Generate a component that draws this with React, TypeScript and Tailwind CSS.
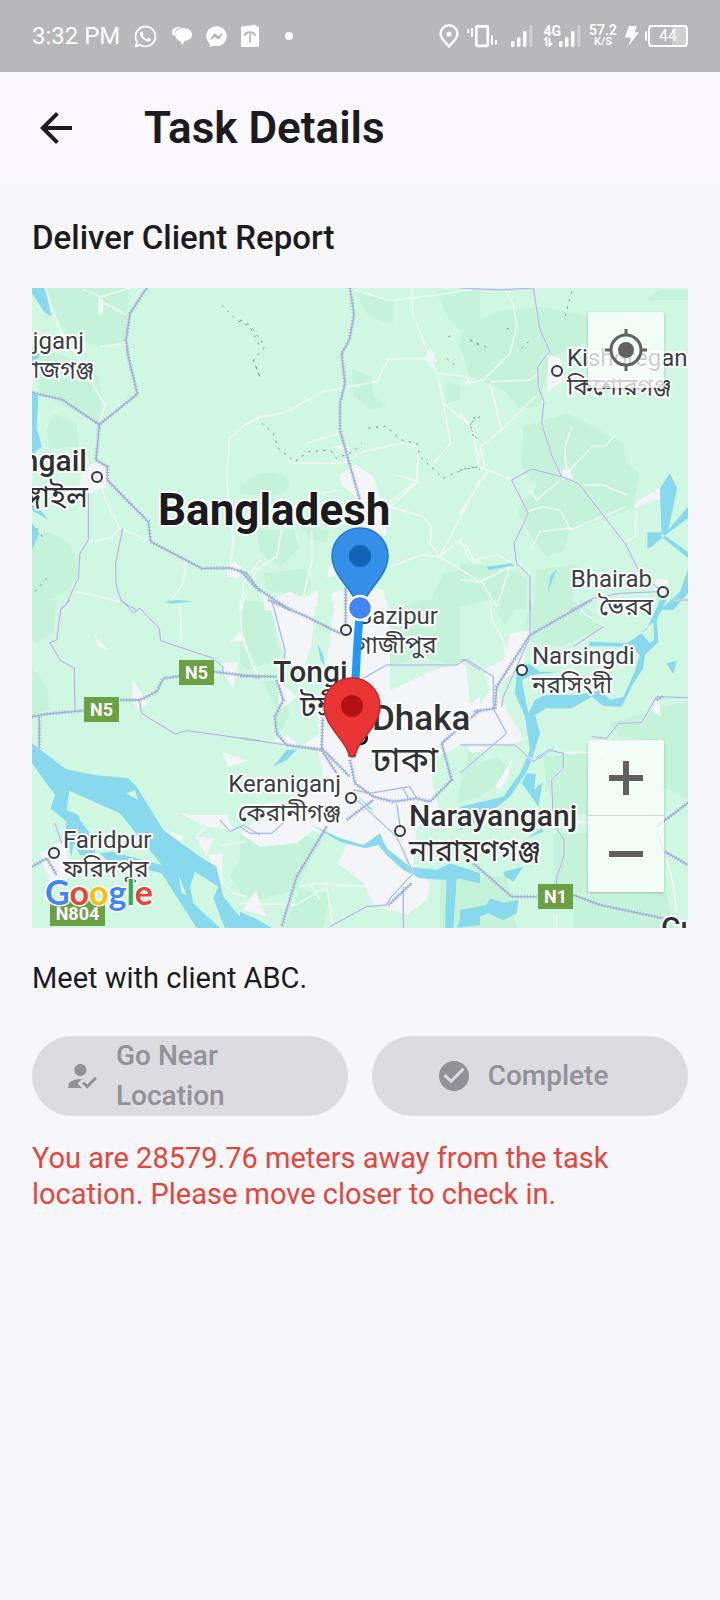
import type { ReactNode, SVGProps } from "react";
import { FaFacebookMessenger, FaWhatsapp } from "react-icons/fa";
import { MdArrowBack, MdCheckCircle, MdHowToReg } from "react-icons/md";

/* ---------- Status bar ---------- */

function SignalBars() {
  return (
    <svg viewBox="0 0 22 22" className="h-[22px] w-[22px]" fill="white">
      <rect x="0" y="16" width="3.500" height="6" rx="1.500" />
      <rect x="6" y="12" width="3.500" height="10" rx="1.500" />
      <rect x="12" y="6" width="3.500" height="16" rx="1.500" />
      <rect x="18" y="0" width="3.500" height="22" rx="1.500" opacity="0.3" />
    </svg>
  );
}

function StatusBar() {
  return (
    <div className="flex h-[72px] items-center justify-between bg-[#b8b8ba] px-8 text-white">
      <div className="flex items-center gap-[13px]">
        <span className="text-2xl">3:32 PM</span>
        <FaWhatsapp size={25} />
        <svg viewBox="0 0 22 22" className="h-[22px] w-[22px]" fill="white">
          <path d="M1 8C0.500 3 6 0.500 12 2.300C6 2.500 3 6 4 11C2 10.500 1 9.500 1 8Z" />
          <path d="M12.500 3.200C17.500 3.200 21 5.200 21 9.500C21 13.500 18 15.500 13.500 15.700L11.500 20.500L9.500 16.500C6.500 15 4.200 13 4.200 9.500C4.200 5.200 8 3.200 12.500 3.200Z" />
        </svg>
        <FaFacebookMessenger size={21} />
        <svg viewBox="0 0 20 24" className="h-6 w-5" fill="white">
          <path d="M2 2.500L15 0.500L17 2V3H2Z" opacity="0.8" />
          <rect x="1" y="2.500" width="18" height="20.500" rx="1" />
          <path d="M4.500 12C5.500 7 14.500 7 15.500 12M10 9.500V18.500" stroke="#b8b8ba" strokeWidth="1.800" fill="none" />
        </svg>
        <span className="ml-3 size-2 rounded-full bg-white" />
      </div>
      <div className="flex items-center gap-2">
        <svg viewBox="0 0 20 24" className="h-6 w-5" fill="none" stroke="white" strokeWidth="2.400">
          <path d="M10 22.500C5.500 17.500 1.500 14.500 1.500 9.800A8.500 8.500 0 0 1 18.500 9.800C18.500 14.500 14.500 17.500 10 22.500Z" />
          <circle cx="10" cy="10" r="2.600" fill="white" stroke="none" />
        </svg>
        <svg viewBox="0 0 30 24" className="mr-1.5 h-6 w-[30px]" fill="none" stroke="white">
          <path d="M1.300 5V9M5 4V13M25 11.500V21M29 16V20.500" strokeWidth="2" />
          <rect x="9.300" y="2.300" width="11.500" height="19.500" rx="1" strokeWidth="2.700" />
        </svg>
        <SignalBars />
        <div className="ml-0.5 flex items-end">
          <div className="-mr-0.5 flex flex-col items-start">
            <span className="text-sm leading-3 font-bold">4G</span>
            <svg viewBox="0 0 10 10" className="h-2.5 w-2.5" fill="none" stroke="white" strokeWidth="1.800">
              <path d="M1 3L3.500 1V9M6.500 1V9L9 6" />
            </svg>
          </div>
          <SignalBars />
        </div>
        <div className="flex flex-col items-center font-semibold">
          <span className="text-sm leading-3">57.2</span>
          <span className="text-[11px] leading-3">K/S</span>
        </div>
        <div className="flex items-center gap-1.5">
          <svg viewBox="0 0 14 20" className="h-5 w-3.5" fill="white">
            <path d="M4 0H12L9.500 6.500H14L3.500 20L6 11.500H0Z" />
          </svg>
          <div className="flex items-center gap-px">
            <span className="h-2.5 w-0.5 rounded-l bg-white" />
            <div className="flex h-[22px] w-10 items-center justify-center rounded border-2 border-white bg-linear-to-r from-transparent from-60% to-white/35 to-60% text-base leading-none">
              44
            </div>
          </div>
        </div>
      </div>
    </div>
  );
}

/* ---------- Map ---------- */

/* The map is drawn in six tiles, each with three units to the pixel. */
type TileId = "a" | "b" | "c" | "d" | "e" | "f";

const tileOrigin: Record<TileId, string> = {
  a: "translate(20 280) scale(0.3333)",
  b: "translate(240 280) scale(0.3333)",
  c: "translate(460 280) scale(0.3333)",
  d: "translate(20 600) scale(0.3333)",
  e: "translate(240 600) scale(0.3333)",
  f: "translate(460 600) scale(0.3333)",
};

type Layer = Partial<Record<TileId, string>>;

const forest: Layer = {
  a: "M80 24H330L320 100L318 190L240 200L150 170L110 120ZM40 200L230 260L250 370L235 430L60 340ZM100 400L170 430L175 500L90 505L80 450ZM36 770C90 730 160 790 175 850C180 920 110 970 36 960Z",
  b: "M340 30L460 60L460 125L430 130L380 100ZM590 30H720V120L660 150L620 110ZM335 265L395 290L400 350L440 375L400 390L340 350ZM0 620C50 560 140 570 150 610C140 660 60 650 0 640ZM50 750H160L180 800L120 860L60 820ZM70 880L200 865L215 920L190 950L80 930ZM610 880L720 860V990H560ZM620 300L660 320V360L620 370ZM180 740L270 750L260 790L210 775Z",
  c: "M10 140L130 90L240 80L400 110L380 190L270 230L240 380L180 385L130 330L30 290L0 200ZM190 440L320 400L400 440L490 490L500 550L540 580L520 680L430 720L330 750L310 810L260 830L220 780L170 690L230 620L185 560ZM0 850L140 860L200 900V990H0ZM230 870L360 850L330 990H220ZM560 60H684V30H600Z",
  d: "M36 0H110L100 100L50 130L36 120ZM36 200L80 260L90 330L36 345ZM660 30L720 20V90L690 80ZM680 740L720 720V880L660 870L630 830Z",
  e: "M450 40L540 0H720V170L600 200L540 250L450 270ZM0 700L110 690L250 720L200 800L170 870L60 900L0 880ZM0 0L90 10L120 180L20 210L0 190ZM40 250L110 240L150 340L120 400L30 390L0 340ZM640 470L720 420V590L650 610L580 570ZM600 830L720 790V984H600ZM180 870L270 880L250 984H130Z",
  f: "M210 20L360 0L430 80L300 140L180 120ZM0 0H180L120 100L0 80ZM250 470L380 460L384 640L300 660L260 560ZM450 370L684 300V600L610 560L610 430L480 410ZM280 700H384V880H340L280 850ZM340 890L620 880L640 984H340ZM0 830L140 830L170 984H0ZM0 510L110 470L160 510L60 590Z",
};

const urban: Layer = {
  a: "M190 565L230 545L265 570L258 620L205 645L175 620ZM620 860L645 845L675 870L655 895L622 890ZM235 45L252 70L245 110L235 100Z",
  b: "M298 585L345 553L400 590L425 660L440 760L400 800L280 890L258 890L290 800L300 760L370 730L360 660L305 615ZM65 930L85 960L150 935L190 955L235 930V990H75ZM275 940L360 910L430 930L440 990H275ZM550 240L570 205L592 245ZM270 500L320 495L330 515Z",
  c: "M265 225L300 235L315 300L262 335ZM305 570L330 570L340 595L305 598ZM520 685L535 660L600 625L605 655ZM590 895L625 900L620 950L580 930Z",
  d: "M218 95L240 125L268 150L235 140ZM340 240L385 310L350 330L335 300ZM630 125L660 95L667 125ZM610 190L655 185L640 265L612 220ZM605 455L685 482L625 500ZM490 645L620 645L640 690L560 680ZM525 710L580 715L560 768ZM565 765L610 760L605 850L585 830ZM435 690L490 710L475 740ZM60 760L130 720L160 830L90 850ZM680 910L710 870L720 940Z",
  e: "M85 0L230 0L215 140L185 230L150 180L130 160ZM235 120L300 0H440L450 40V260L560 215L660 190L720 215V400L620 460L590 480L580 560L600 640L530 680L520 790L570 850L560 900L500 945L400 915L370 850L320 810L290 790L330 720L220 690L170 730L60 740L0 700V620L180 600L250 530L230 440L130 440L100 420L240 370L210 290ZM110 240L170 290L120 330ZM10 930L45 875L80 950Z",
  f: "M0 340L60 310L90 270L70 210L130 180L150 100L215 90L190 190L110 260L140 330L190 420L160 430L110 440L40 460L0 440ZM8 120L82 95L30 175ZM105 560L158 475L145 530L120 570ZM575 330L600 285V350Z",
};

const meadow: Layer = {
  e: "M225 20L285 0L270 110L250 270L290 280L210 300L180 240L215 130ZM0 240L70 250L110 330L100 400L0 400ZM140 400L220 340L240 400L180 440ZM450 200L540 170L620 190L500 250L450 270ZM570 480L690 430L650 610L580 570ZM0 610L100 590L60 650L0 700ZM260 330L290 350L260 390Z",
  f: "M0 20L90 0L150 100L100 190L40 170L0 180ZM20 200L75 215L60 290L30 310Z",
};

const water: Layer = {
  a: "M36 24H75L95 110L72 95L36 40ZM36 200L60 215L36 300ZM36 330L55 350L50 440L65 500L36 525ZM36 640L62 690L85 720L36 690ZM36 730L58 760L36 810ZM430 965L470 960L518 964L455 971Z",
  c: "M600 625L630 580L652 625L625 750L684 680V715L610 770L575 800L562 805V757H600L684 815V835L605 770ZM80 860L155 850L162 857L85 870ZM262 940L272 885L290 868ZM684 870L660 935L600 990H640L684 940Z",
  d: "M36 430L138 508L225 525L325 535L350 560L430 690L540 770L590 800L610 890L660 950L720 972V984H615L580 895L595 860L525 815L510 860L520 910L600 984H530L425 820L260 780L240 760L275 755L425 795L300 640L148 572L140 630L175 645L180 660L225 720L225 770L180 765L160 730L155 770L135 700L140 665L92 625L105 585L36 490ZM475 825L500 885L485 880ZM318 580L345 570L355 600Z",
  e: "M0 935L45 955L95 984H0ZM210 672L300 715L370 735L420 700L440 745L510 800L590 810L630 790L720 820V850L650 835L640 984H615L620 840L540 835L490 810L440 765L415 735L375 745L300 725ZM100 500L140 450L172 448L140 480ZM232 130L250 165L252 195L242 180ZM350 585L400 630L388 628ZM650 984L670 935L720 930V975Z",
  f: "M620 0L590 60L595 125L555 165L550 205L520 250L485 320L430 318L395 290L335 325L260 325L225 345L240 400L215 480L200 515L150 590L60 660L0 690V620L130 590L180 520L210 450L195 350L165 280L170 215L205 190L240 215L300 215L215 225L185 240L205 340L225 300L255 285L355 285L420 270L450 300L490 290L520 225L540 165L515 140L385 138L390 125L500 130L560 90L600 0ZM545 100L580 65L582 120L570 130ZM200 520L228 522L222 570L248 545L235 620L215 590L185 550ZM620 190L650 182L640 223ZM130 815L190 800L160 845L135 830ZM0 930L80 915L90 895L130 908L175 900L170 940L130 960L85 940L0 972ZM200 715L245 685L250 695ZM225 470L285 440L240 478Z",
};

const lanes: Layer = {
  a: "M75 24L120 150L165 220L255 375L238 432M190 30L245 50L330 24M240 60L318 105M240 200L318 190M720 410L680 430L628 475L620 600L640 780L632 850M245 620L260 670L300 745L385 780M205 785L270 775L300 745M495 840L490 910L455 960M720 840L670 910L665 990M170 935L300 965",
  b: "M340 30L450 62L590 45L720 24M515 24L518 100L560 210L595 290L632 490L580 550M0 445L60 410L130 400L250 335L410 305L445 237L555 235L595 280L680 290L690 315M610 370L690 435L720 540M200 490L300 460M150 548L310 550L370 515L480 490L535 500L530 605L400 700M470 585L535 605L450 680L550 710L575 740L570 790L600 830L545 825L450 860M600 830L660 780L690 840L720 850M600 830L720 600M600 830L720 905M245 640L300 630M0 990L50 870L110 830L125 750M190 950L215 850L215 750",
  c: "M130 24L160 70L170 140L150 220L70 300L10 310M90 305L210 300L235 280M90 310L125 450L230 345M125 450L60 500L80 580L0 700M0 400L40 450L55 560L160 600M300 590L330 570L395 500L440 495L465 465M318 570L315 500L335 440M370 615L430 615L500 645M210 630L230 660L300 600M200 695L250 680L300 690L330 745L240 755L212 810M330 750L500 680M530 690L525 770L500 785M0 900L60 905L150 860L110 980L65 905M0 790L20 800L40 840L110 825L160 850",
  d: "M480 20L485 130M660 0L665 100L700 200M485 640L590 675M530 710L560 680M605 735L680 725M600 840L640 880L680 890",
  e: "M0 100L50 220M180 860L230 850L450 865M0 910L170 915L260 860L280 980M210 850L240 900",
  f: "M90 0L95 60L130 120L140 180M300 458H430M350 0L370 40L430 75M285 430L300 460M240 665L384 668M620 780L640 850L650 940M290 940V984",
};

const highways: Layer = {
  a: "M380 24L330 100L318 180L325 230L352 342L238 434L125 358L36 338M238 434L228 540L262 560L262 600L320 660L385 725L392 785L545 865L630 864L680 880L720 935",
  b: "M330 24L342 105L328 180L305 220L315 310L300 370L300 450L325 540L360 660M0 870L45 920L150 990M317 925V990",
  d: "M36 350L80 342L190 332M300 300H360L410 275L430 235L480 228M582 215L720 232M58 350V445M36 800L80 775L110 825",
  e: "M85 0L200 50L300 100M317 0V80M110 240L130 300L105 350L110 400L140 435L250 450L330 530M0 228L110 230M250 280L245 450L290 520M260 680L170 830L125 980M330 480L345 550L400 590L460 605L530 595L570 605L635 540L605 430L720 330M320 660L400 600M445 915L515 850",
  f: "M395 0L210 105L110 260L105 325L40 335M40 790L155 890L230 890M340 885L420 915L610 955M684 608L590 680M615 755L684 795M590 300L610 288",
};

const regionalRoads: Layer = {
  a: "M205 640V780L180 820L175 895L140 970L120 990M308 745L287 850L288 915L305 965L350 990",
  c: "M220 24L240 150L270 213L233 260L235 320L252 365L245 430L275 525L305 590L215 567L155 600L205 700L162 790L170 850L210 890V990M305 590L355 610L495 790L540 880L600 930M0 24L120 30L220 24M330 990L400 955L480 940L600 935",
  d: "M150 0L122 30L110 120L90 128L120 180L163 205L165 330M305 0L340 38L360 25L418 85L422 122L580 175L608 200V215M358 300L365 340L465 402L500 392L720 422M105 670L125 730M600 660L630 695L670 675L720 705",
  e: "M95 0L135 150L130 240M0 415L140 435M370 235L440 195L650 195L675 180L720 210M0 680L30 700L95 700L140 660M340 570L390 580L510 560L530 595M340 590L470 710L520 820L450 895L440 915L380 920L270 980M490 860L490 984M490 565L505 595M470 610L485 710",
  f: "M210 0V105L340 30M0 180L20 178L100 230V325L140 400L0 520M215 100L130 290L125 320M0 435L165 435L220 485L265 450L310 460V505L275 540L280 670L312 720V765L290 835V890M340 140L430 80M395 410L440 415L475 370L545 368L590 290L684 293M590 680L610 755M640 0H684",
};

const boundaries: Layer = {
  a: "M605 75L650 120L690 140L720 200M700 240L720 290M50 745L70 775M80 895L45 935",
  b: "M0 120L30 135L75 200L40 240L60 290M65 430L100 460L115 505L165 545L205 515L270 510L290 535L340 515L365 490M385 445L435 438L485 480L530 490L540 530L610 595L690 560L720 568M625 170L640 165M620 235L645 255M690 180L715 195M720 410L690 430L700 470",
  c: "M335 35L315 110M30 180L85 205M140 145L155 150M185 205L205 185M45 410L28 440L50 475M0 570L60 560",
};

function Tiles({ layer, ...paint }: { layer: Layer } & SVGProps<SVGGElement>) {
  return (
    <g {...paint}>
      {(Object.keys(layer) as TileId[]).map((id) => (
        <path key={id} d={layer[id]} transform={tileOrigin[id]} />
      ))}
    </g>
  );
}

const towns = [
  [97, 477],
  [557, 371],
  [663, 592],
  [346, 630],
  [351, 798],
  [522, 670],
  [400, 831],
  [54, 853],
];

type LabelSize = "small" | "medium" | "mediumBangla" | "city" | "cityBangla" | "country";

const labelStyle: Record<LabelSize, string> = {
  small: "text-[24px] font-normal fill-[#3a3e43]",
  medium: "text-[30px] font-medium fill-[#2d3034]",
  mediumBangla: "text-[30px] font-normal fill-[#2d3034]",
  city: "text-[35px] font-medium fill-[#2d3034]",
  cityBangla: "text-[35px] font-normal fill-[#2d3034]",
  country: "text-[44px] font-bold fill-[#191b1e]",
};

const labels: { text: string; x: number; y: number; size: LabelSize; end?: boolean }[] = [
  { text: "jganj", x: 84, y: 349, size: "small", end: true },
  { text: "সিরাজগঞ্জ", x: 94, y: 378, size: "small", end: true },
  { text: "ngail", x: 87, y: 471, size: "medium", end: true },
  { text: "টাঙ্গাইল", x: 88, y: 507, size: "mediumBangla", end: true },
  { text: "Bangladesh", x: 158, y: 525, size: "country" },
  { text: "Kishoregan", x: 567, y: 366, size: "small" },
  { text: "কিশোরগঞ্জ", x: 567, y: 395, size: "small" },
  { text: "Bhairab", x: 652, y: 587, size: "small", end: true },
  { text: "ভৈরব", x: 653, y: 615, size: "small", end: true },
  { text: "Narsingdi", x: 532, y: 664, size: "small" },
  { text: "নরসিংদী", x: 532, y: 693, size: "small" },
  { text: "Gazipur", x: 356, y: 624, size: "small" },
  { text: "গাজীপুর", x: 356, y: 653, size: "small" },
  { text: "Tongi", x: 273, y: 682, size: "medium" },
  { text: "টঙ্গী", x: 300, y: 717, size: "mediumBangla" },
  { text: "Dhaka", x: 372, y: 730, size: "city" },
  { text: "ঢাকা", x: 372, y: 772, size: "cityBangla" },
  { text: "Keraniganj", x: 341, y: 792, size: "small", end: true },
  { text: "কেরানীগঞ্জ", x: 341, y: 821, size: "small", end: true },
  { text: "Narayanganj", x: 409, y: 826, size: "medium" },
  { text: "নারায়ণগঞ্জ", x: 409, y: 861, size: "mediumBangla" },
  { text: "Faridpur", x: 63, y: 848, size: "small" },
  { text: "ফরিদপুর", x: 63, y: 877, size: "small" },
  { text: "Cu", x: 661, y: 938, size: "medium" },
];

const shields = [
  { text: "N5", x: 179, y: 660, width: 35 },
  { text: "N5", x: 84, y: 697, width: 35 },
  { text: "N1", x: 538, y: 884, width: 35 },
  { text: "N804", x: 50, y: 901, width: 55 },
];

function Pin({ x, y, fill, edge, dot }: { x: number; y: number; fill: string; edge: string; dot: string }) {
  return (
    <g transform={`translate(${x} ${y})`}>
      <path
        d="M0 51C-2 51 -3 49 -4 46C-8 33 -28 19 -28 0A28 28 0 0 1 28 0C28 19 8 33 4 46C3 49 2 51 0 51Z"
        fill={fill}
        stroke={edge}
        strokeWidth="1.500"
      />
      <circle r="11" fill={dot} />
    </g>
  );
}

function MapDrawing() {
  return (
    <svg
      viewBox="32 288 656 640"
      preserveAspectRatio="xMidYMid slice"
      className="block h-full w-full bg-[#d0f7e2]"
      role="img"
      aria-label="Map of Dhaka and its surroundings"
    >
      <Tiles layer={forest} fill="#c4f3da" />
      <Tiles layer={urban} fill="#f4f5f8" />
      <Tiles layer={meadow} fill="#d0f7e2" />
      <Tiles layer={water} fill="#88d9ee" fillRule="evenodd" />
      <Tiles layer={lanes} fill="none" stroke="#effaf5" strokeWidth="5" strokeLinejoin="round" />
      <Tiles layer={boundaries} fill="none" stroke="#6f9a88" strokeWidth="3" strokeDasharray="7 16" />
      <Tiles layer={regionalRoads} fill="none" stroke="#e0e9f4" strokeWidth="7" strokeLinejoin="round" />
      <Tiles layer={regionalRoads} fill="none" stroke="#a3b6d9" strokeWidth="3" strokeLinejoin="round" />
      <Tiles layer={highways} fill="none" stroke="#d3dfee" strokeWidth="11" strokeDasharray="4 5" />
      <Tiles layer={highways} fill="none" stroke="#9fb0d6" strokeWidth="4" strokeLinejoin="round" />
      <Tiles layer={highways} fill="none" stroke="#a3b2d6" strokeWidth="11" strokeDasharray="2.500 6.500" />

      {towns.map(([cx, cy]) => (
        <circle key={`${cx}-${cy}`} cx={cx} cy={cy} r="5" fill="#f4f5f8" stroke="#34383d" strokeWidth="2" />
      ))}
      <circle cx="361" cy="738" r="5.500" fill="white" stroke="black" strokeWidth="3" />
      <circle cx="361" cy="738" r="2" fill="black" />
      {labels.map((label) => (
        <text
          key={label.text}
          x={label.x}
          y={label.y}
          textAnchor={label.end ? "end" : "start"}
          stroke="white"
          strokeWidth="4"
          strokeLinejoin="round"
          paintOrder="stroke"
          className={labelStyle[label.size]}
        >
          {label.text}
        </text>
      ))}
      {shields.map((shield) => (
        <g key={`${shield.x}-${shield.y}`}>
          <rect x={shield.x} y={shield.y} width={shield.width} height="25" fill="#6ba043" />
          <text
            x={shield.x + shield.width / 2}
            y={shield.y + 19}
            textAnchor="middle"
            className="fill-white text-[18px] font-bold"
          >
            {shield.text}
          </text>
        </g>
      ))}

      <path d="M360 607L357 650L355 690L352 757" fill="none" stroke="#2196f3" strokeWidth="8" />
      <Pin x={360} y={556} fill="#368fe8" edge="#1f76c9" dot="#1163b5" />
      <Pin x={352} y={706} fill="#e93535" edge="#cf2222" dot="#b41212" />
      <circle cx="360" cy="608" r="12" fill="#4285f4" stroke="white" strokeWidth="2.500" />

      <text
        x="45"
        y="905"
        stroke="white"
        strokeWidth="3"
        strokeLinejoin="round"
        paintOrder="stroke"
        className="font-['Lato',sans-serif] text-[34px] font-bold"
      >
        <tspan fill="#4285f4">G</tspan>
        <tspan fill="#ea4335">o</tspan>
        <tspan fill="#fbbc04">o</tspan>
        <tspan fill="#4285f4">g</tspan>
        <tspan fill="#34a853">l</tspan>
        <tspan fill="#ea4335">e</tspan>
      </text>
    </svg>
  );
}

function MapControl({ label, children }: { label: string; children: ReactNode }) {
  return (
    <button type="button" aria-label={label} className="flex size-[76px] items-center justify-center text-[#616161]">
      {children}
    </button>
  );
}

function TaskMap() {
  return (
    <div className="relative h-[640px] overflow-hidden">
      <MapDrawing />
      <div className="absolute top-6 right-6 rounded-xs bg-white/75 shadow-[0_1px_3px_rgba(0,0,0,0.25)]">
        <MapControl label="My location">
          <svg viewBox="0 0 42 42" className="size-[42px]" fill="none" stroke="currentColor">
            <circle cx="21" cy="21" r="15" strokeWidth="3" />
            <circle cx="21" cy="21" r="8" fill="currentColor" stroke="none" />
            <path d="M21 0V7M21 35V42M0 21H7M35 21H42" strokeWidth="3" />
          </svg>
        </MapControl>
      </div>
      <div className="absolute right-6 bottom-9 flex flex-col divide-y divide-black/15 rounded-xs bg-white/75 shadow-[0_1px_3px_rgba(0,0,0,0.25)]">
        <MapControl label="Zoom in">
          <svg viewBox="0 0 34 34" className="size-[34px]" stroke="currentColor" strokeWidth="6">
            <path d="M17 0V34M0 17H34" />
          </svg>
        </MapControl>
        <MapControl label="Zoom out">
          <svg viewBox="0 0 34 34" className="size-[34px]" stroke="currentColor" strokeWidth="6">
            <path d="M0 17H34" />
          </svg>
        </MapControl>
      </div>
    </div>
  );
}

/* ---------- Page ---------- */

function ActionButton({ icon, children }: { icon: ReactNode; children: ReactNode }) {
  return (
    <button
      type="button"
      disabled
      className="flex min-h-20 flex-1 basis-0 items-center justify-center gap-4 rounded-[40px] bg-[#dcdbe0] pr-12 pl-8 text-left text-[28px] leading-10 font-medium text-[#929197]"
    >
      <span className="shrink-0">{icon}</span>
      <span>{children}</span>
    </button>
  );
}

export default function App() {
  return (
    <div className="min-h-screen bg-[#f7f7fa] font-['Roboto','Noto_Sans_Bengali','Noto_Sans',sans-serif] text-[#1d1b20]">
      <StatusBar />
      <header className="flex h-28 items-center gap-16 bg-[#fbf9ff] px-8">
        <button type="button" aria-label="Back">
          <MdArrowBack size={48} />
        </button>
        <h1 className="text-[44px] leading-[52px] font-semibold">Task Details</h1>
      </header>
      <main className="px-8 pt-8">
        <h2 className="mb-7 text-[33px] leading-[44px] font-medium">Deliver Client Report</h2>
        <TaskMap />
        <p className="mt-8 text-[29px] leading-9">Meet with client ABC.</p>
        <div className="mt-10 flex gap-6">
          <ActionButton icon={<MdHowToReg size={36} />}>Go Near Location</ActionButton>
          <ActionButton icon={<MdCheckCircle size={36} />}>Complete</ActionButton>
        </div>
        <p className="mt-6 text-[29px] leading-9 text-[#e5463c]">
          You are 28579.76 meters away from the task location. Please move closer to check in.
        </p>
      </main>
    </div>
  );
}
